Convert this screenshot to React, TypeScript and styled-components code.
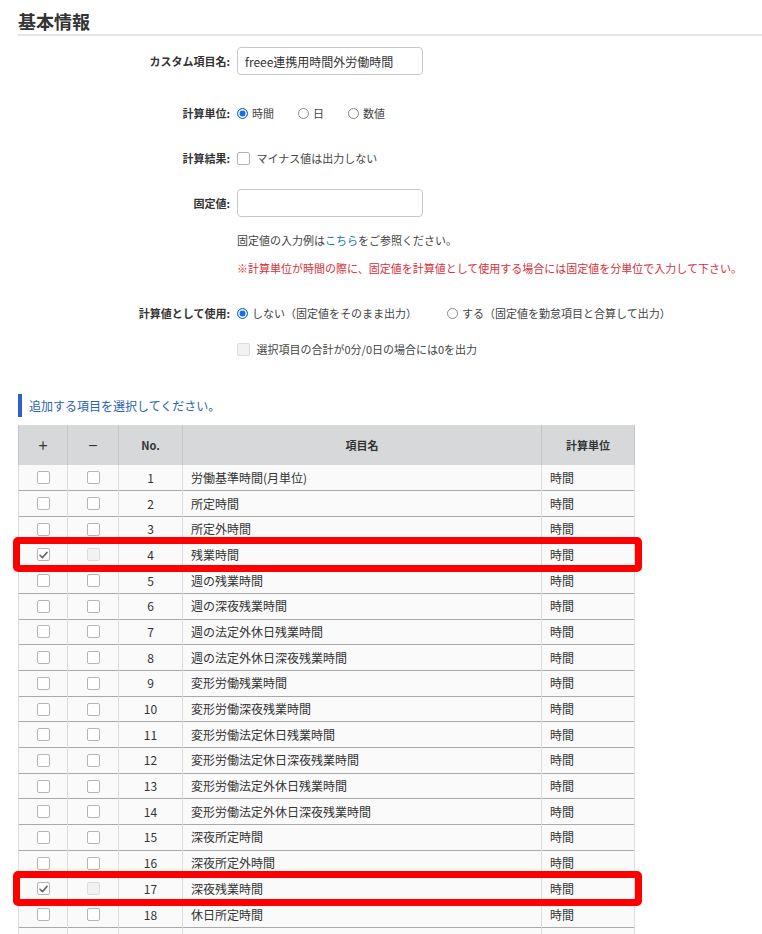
import React from "react";
import styled, {createGlobalStyle} from "styled-components";

const GlobalStyle = createGlobalStyle`
	html, body {
		margin: 0;
		padding: 0;
		background: #ffffff;
	}
	body {
		font-family: "Noto Sans CJK JP", "Noto Sans", sans-serif;
		color: #333333;
		font-size: 11px;
	}
`;

const Page = styled.div`
	width: 762px;
	height: 934px;
	overflow: hidden;
	box-sizing: border-box;
	padding-left: 18px;
`;

const Title = styled.h2`
	margin: 0;
	padding: 9px 0 1px;
	font-size: 18px;
	line-height: 24px;
	font-weight: 700;
	color: #333333;
	border-bottom: 2px solid #e6e6e6;
`;

const Field = styled.div<{$gap: number}>`
	display: grid;
	grid-template-columns: 212px 1fr;
	column-gap: 7px;
	align-items: center;
	margin-top: ${({$gap}) => $gap}px;
	min-height: 20px;
`;

const Label = styled.div`
	text-align: right;
	font-weight: 700;
	font-size: 11px;
	color: #333333;
	white-space: nowrap;
`;

const Value = styled.div<{$spread?: number}>`
	display: flex;
	align-items: center;
	gap: ${({$spread}) => $spread ?? 24}px;
	white-space: nowrap;
`;

const TextBox = styled.div`
	width: 186px;
	height: 28px;
	box-sizing: border-box;
	border: 1px solid #c8c8c8;
	border-radius: 4px;
	display: flex;
	align-items: center;
	padding-left: 7px;
	font-size: 12px;
	color: #333333;
`;

const Option = styled.label`
	display: inline-flex;
	align-items: center;
	gap: 4px;
	font-size: 11px;
	color: #444444;
`;

const Radio = styled.span<{$on?: boolean}>`
	width: 11px;
	height: 11px;
	box-sizing: border-box;
	border-radius: 50%;
	border: 1px solid ${({$on}) => ($on ? "#1a6fe0" : "#8a8a8a")};
	background: ${({$on}) => ($on ? "#1a6fe0" : "#ffffff")};
	box-shadow: ${({$on}) => ($on ? "inset 0 0 0 1.5px #ffffff" : "none")};
`;

const Box = styled.span<{$disabled?: boolean}>`
	width: 13px;
	height: 13px;
	box-sizing: border-box;
	border-radius: 2px;
	border: 1px solid ${({$disabled}) => ($disabled ? "#dcdcdc" : "#b5b5b5")};
	background: ${({$disabled}) => ($disabled ? "#f2f2f2" : "#ffffff")};
	display: inline-flex;
	align-items: center;
	justify-content: center;
`;

const Note = styled.div<{$red?: boolean}>`
	font-size: 11px;
	color: ${({$red}) => ($red ? "#d6303a" : "#444444")};
	white-space: nowrap;
`;

const Link = styled.span`
	color: #1a6fc9;
`;

const SectionHead = styled.div`
	margin-top: 35px;
	height: 23px;
	border-left: 4px solid #2f62c8;
	padding-left: 7px;
	display: flex;
	align-items: center;
	font-size: 12px;
	color: #2a63b3;
`;

const TableWrap = styled.div`
	position: relative;
	margin-top: 8px;
	width: 617px;
`;

const Table = styled.table`
	border-collapse: collapse;
	width: 617px;
	table-layout: fixed;
	font-size: 12px;
	color: #333333;
`;

const Th = styled.th<{$w: number}>`
	width: ${({$w}) => $w}px;
	height: 40px;
	padding: 0;
	background: #d6d8d9;
	border-left: 1px solid #c4c6c7;
	border-right: 1px solid #c4c6c7;
	font-weight: 700;
	font-size: 11px;
	text-align: center;
	color: #333333;
`;

const Tr = styled.tr`
	height: 25.7px;
	background: #fafafa;
	border-bottom: 1px solid #a9a9a9;
`;

const Td = styled.td<{$align?: string}>`
	padding: 0 0 0 ${({$align}) => ($align === "left" ? "8px" : "0")};
	border-left: 1px solid #dddddd;
	border-right: 1px solid #dddddd;
	text-align: ${({$align}) => $align || "center"};
	vertical-align: middle;
	white-space: nowrap;
	line-height: 1;
`;

const BoxCell = styled.div`
	display: flex;
	justify-content: center;
	align-items: center;
`;

const Highlight = styled.div`
	position: absolute;
	left: -5px;
	width: 629px;
	height: 35px;
	box-sizing: border-box;
	border: 7px solid #ff0000;
	border-radius: 5px;
	pointer-events: none;
`;

const Check = () => (
	<svg width="9" height="8" viewBox="0 0 9 8">
		<path
			d="M1 4.2 L3.4 6.6 L8 1.4"
			fill="none"
			stroke="#6b6b6b"
			strokeWidth="1.6"
			strokeLinecap="round"
			strokeLinejoin="round"
		/>
	</svg>
);

const items = [
	"労働基準時間(月単位)",
	"所定時間",
	"所定外時間",
	"残業時間",
	"週の残業時間",
	"週の深夜残業時間",
	"週の法定外休日残業時間",
	"週の法定外休日深夜残業時間",
	"変形労働残業時間",
	"変形労働深夜残業時間",
	"変形労働法定休日残業時間",
	"変形労働法定休日深夜残業時間",
	"変形労働法定外休日残業時間",
	"変形労働法定外休日深夜残業時間",
	"深夜所定時間",
	"深夜所定外時間",
	"深夜残業時間",
	"休日所定時間",
];

const selected = [4, 17];
const ROW_H = 25.7;
const HEAD_H = 40;

export default function App() {
	return (
		<Page>
			<GlobalStyle />
			<Title>基本情報</Title>

			<Field $gap={11}>
				<Label>カスタム項目名:</Label>
				<Value>
					<TextBox>freee連携用時間外労働時間</TextBox>
				</Value>
			</Field>

			<Field $gap={28}>
				<Label>計算単位:</Label>
				<Value>
					<Option>
						<Radio $on />
						時間
					</Option>
					<Option>
						<Radio />日
					</Option>
					<Option>
						<Radio />
						数値
					</Option>
				</Value>
			</Field>

			<Field $gap={25}>
				<Label>計算結果:</Label>
				<Value>
					<Option>
						<Box />
						&nbsp;マイナス値は出力しない
					</Option>
				</Value>
			</Field>

			<Field $gap={21}>
				<Label>固定値:</Label>
				<Value>
					<TextBox />
				</Value>
			</Field>

			<Field $gap={13}>
				<span />
				<Note>
					固定値の入力例は<Link>こちら</Link>をご参照ください。
				</Note>
			</Field>

			<Field $gap={8}>
				<span />
				<Note $red>
					※計算単位が時間の際に、固定値を計算値として使用する場合には固定値を分単位で入力して下さい。
				</Note>
			</Field>

			<Field $gap={25}>
				<Label>計算値として使用:</Label>
				<Value $spread={30}>
					<Option>
						<Radio $on />
						しない（固定値をそのまま出力）
					</Option>
					<Option>
						<Radio />
						する（固定値を勤怠項目と合算して出力）
					</Option>
				</Value>
			</Field>

			<Field $gap={16}>
				<span />
				<Value>
					<Option>
						<Box $disabled />
						&nbsp;選択項目の合計が0分/0日の場合には0を出力
					</Option>
				</Value>
			</Field>

			<SectionHead>追加する項目を選択してください。</SectionHead>

			<TableWrap>
				<Table>
					<thead>
						<tr>
							<Th $w={48}>＋</Th>
							<Th $w={50}>－</Th>
							<Th $w={63}>No.</Th>
							<Th $w={358}>項目名</Th>
							<Th $w={92}>計算単位</Th>
						</tr>
					</thead>
					<tbody>
						{items.map((name, i) => {
							const no = i + 1;
							const on = selected.includes(no);
							return (
								<Tr key={no}>
									<Td>
										<BoxCell>
											<Box>{on && <Check />}</Box>
										</BoxCell>
									</Td>
									<Td>
										<BoxCell>
											<Box $disabled={on} />
										</BoxCell>
									</Td>
									<Td>{no}</Td>
									<Td $align="left">{name}</Td>
									<Td $align="left">時間</Td>
								</Tr>
							);
						})}
						<Tr>
							<Td />
							<Td />
							<Td />
							<Td />
							<Td />
						</Tr>
					</tbody>
				</Table>
				{selected.map((no) => (
					<Highlight
						key={no}
						style={{top: HEAD_H + (no - 1) * ROW_H - 5}}
					/>
				))}
			</TableWrap>
		</Page>
	);
}
